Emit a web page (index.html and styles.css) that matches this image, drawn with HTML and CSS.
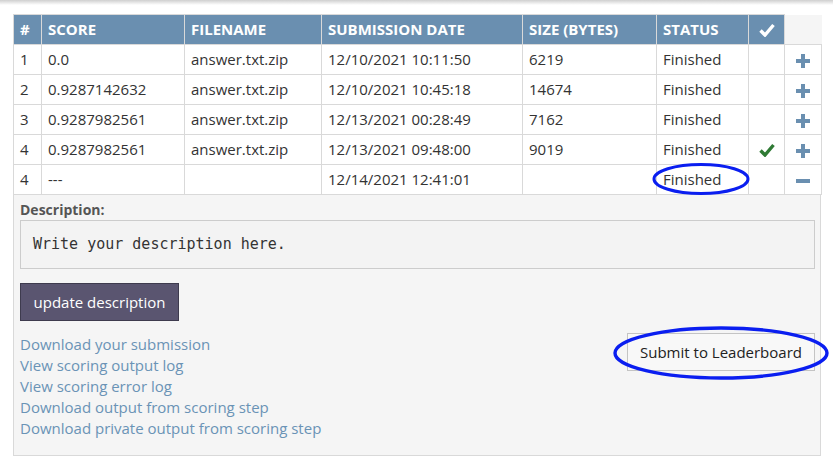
FILE: index.html
```
<!DOCTYPE html>
<html>
<head>
<meta charset="utf-8">
<link rel="stylesheet" href="styles.css">
</head>
<body>
<div class="topshade"></div>
<div class="wrap">
  <table class="subs">
    <colgroup>
      <col class="c-num"><col class="c-score"><col class="c-file"><col class="c-date"><col class="c-size"><col class="c-status"><col class="c-check"><col class="c-act">
    </colgroup>
    <thead>
      <tr>
        <th>#</th><th>SCORE</th><th>FILENAME</th><th>SUBMISSION DATE</th><th>SIZE (BYTES)</th><th>STATUS</th>
        <th class="th-check"><svg width="16" height="14" viewBox="0 0 16 14"><path d="M1.5 7.5 L6 12 L14.5 2" fill="none" stroke="#fff" stroke-width="3.4"/></svg></th>
        <th class="th-blank"></th>
      </tr>
    </thead>
    <tbody>
      <tr><td>1</td><td>0.0</td><td>answer.txt.zip</td><td>12/10/2021 10:11:50</td><td>6219</td><td>Finished</td><td></td><td class="act"><span class="plus"></span></td></tr>
      <tr><td>2</td><td>0.9287142632</td><td>answer.txt.zip</td><td>12/10/2021 10:45:18</td><td>14674</td><td>Finished</td><td></td><td class="act"><span class="plus"></span></td></tr>
      <tr><td>3</td><td>0.9287982561</td><td>answer.txt.zip</td><td>12/13/2021 00:28:49</td><td>7162</td><td>Finished</td><td></td><td class="act"><span class="plus"></span></td></tr>
      <tr><td>4</td><td>0.9287982561</td><td>answer.txt.zip</td><td>12/13/2021 09:48:00</td><td>9019</td><td>Finished</td><td class="chk"><svg width="16" height="14" viewBox="0 0 16 14"><path d="M1.5 7.5 L6 12 L14.5 2" fill="none" stroke="#2f7a34" stroke-width="3.4"/></svg></td><td class="act"><span class="plus"></span></td></tr>
      <tr><td>4</td><td>---</td><td></td><td>12/14/2021 12:41:01</td><td></td><td class="status-mark">Finished<svg class="ring ring-status" width="100" height="34" viewBox="0 0 100 34"><ellipse cx="50" cy="17" rx="47" ry="14.5" fill="none" stroke="#0a1ef0" stroke-width="3"/></svg></td><td></td><td class="act"><span class="minus"></span></td></tr>
    </tbody>
  </table>
  <div class="details">
    <div class="label">Description:</div>
    <div class="desc">Write your description here.</div>
    <div class="bottom">
      <div class="left">
        <div class="update">update description</div>
        <div class="links">
          <a>Download your submission</a>
          <a>View scoring output log</a>
          <a>View scoring error log</a>
          <a>Download output from scoring step</a>
          <a>Download private output from scoring step</a>
        </div>
      </div>
      <div class="right">
        <span class="submit-wrap">
          <span class="submit">Submit to Leaderboard</span>
          <svg class="ring ring-submit" width="218" height="56" viewBox="0 0 218 56"><ellipse cx="109" cy="28" rx="106" ry="25" fill="none" stroke="#0a1ef0" stroke-width="3.4"/></svg>
        </span>
      </div>
    </div>
  </div>
</div>
</body>
</html>
```
FILE: styles.css
```
html, body {
  margin: 0;
  padding: 0;
  background: #fff;
}
body {
  font-family: "Open Sans", "Liberation Sans", sans-serif;
  font-size: 15px;
  color: #333;
  width: 833px;
  height: 467px;
  overflow: hidden;
}
.topshade {
  height: 5px;
  background: linear-gradient(#cfcfcf, #fff);
}
.wrap {
  margin: 9px 0 0 13px;
  width: 808px;
}
.subs {
  width: 808px;
  border-collapse: collapse;
  table-layout: fixed;
}
.c-num { width: 28px; }
.c-score { width: 143px; }
.c-file { width: 137px; }
.c-date { width: 201px; }
.c-size { width: 134px; }
.c-status { width: 92px; }
.c-check { width: 36px; }
.c-act { width: 37px; }
.subs th {
  background: #6a8fb0;
  color: #fff;
  font-weight: 700;
  text-align: left;
  height: 30px;
  padding: 0 6px 1px 6px;
  border: 1px solid #d9d9d9;
  box-sizing: border-box;
  white-space: nowrap;
  font-size: 15px;
}
.subs th.th-check { text-align: center; padding: 0; }
.subs th.th-check svg { display: block; margin: 0 auto; }
.subs th.th-blank {
  background: #f5f5f5;
  border: none;
  border-bottom: 1px solid #d9d9d9;
}
.subs td {
  height: 30px;
  padding: 0 6px 2px 6px;
  border: 1px solid #d9d9d9;
  box-sizing: border-box;
  white-space: nowrap;
  color: #333;
}
.subs td.chk, .subs td.act { text-align: center; padding: 0; }
.subs td.chk svg { display: block; margin: 0 auto; }
.plus, .minus {
  display: inline-block;
  position: relative;
  width: 14px;
  height: 14px;
  vertical-align: middle;
}
.plus::before, .minus::before {
  content: "";
  position: absolute;
  left: 0;
  top: 5px;
  width: 14px;
  height: 4px;
  background: #6a8fb0;
}
.plus::after {
  content: "";
  position: absolute;
  left: 5px;
  top: 0;
  width: 4px;
  height: 14px;
  background: #6a8fb0;
}
.status-mark { position: relative; overflow: visible; }
.ring { position: absolute; pointer-events: none; }
.ring-status { left: -6px; top: -3px; }
.details {
  background: #f5f5f5;
  border: 1px solid #d9d9d9;
  border-top: none;
  padding: 5px 5px 16px 6px;
  box-sizing: border-box;
  height: 261px;
}
.label {
  font-weight: 700;
  color: #555;
  font-size: 14px;
  line-height: 20px;
}
.desc {
  width: 795px;
  height: 49px;
  box-sizing: border-box;
  border: 1px solid #ccc;
  background: #f3f3f3;
  font-family: "DejaVu Sans Mono", "Liberation Mono", monospace;
  font-size: 15px;
  color: #333;
  padding: 13px 12px;
  line-height: 20px;
}
.bottom {
  display: flex;
  justify-content: space-between;
}
.left { display: flex; flex-direction: column; }
.update {
  margin-top: 14px;
  width: 159px;
  height: 38px;
  box-sizing: border-box;
  background: #5a5570;
  border: 1px solid #3e3b4e;
  color: #fff;
  font-size: 15px;
  line-height: 36px;
  text-align: center;
}
.links {
  margin-top: 13px;
  display: flex;
  flex-direction: column;
}
.links a {
  color: #6a93b6;
  line-height: 21px;
  font-size: 15px;
}
.right { padding-top: 64px; }
.submit-wrap { position: relative; display: inline-block; }
.submit {
  display: block;
  width: 188px;
  height: 38px;
  box-sizing: border-box;
  border: 1px solid #c4c4c4;
  background: #f8f8f8;
  color: #222;
  font-size: 15px;
  line-height: 36px;
  text-align: center;
}
.ring-submit { left: -15px; top: -8px; }
```
